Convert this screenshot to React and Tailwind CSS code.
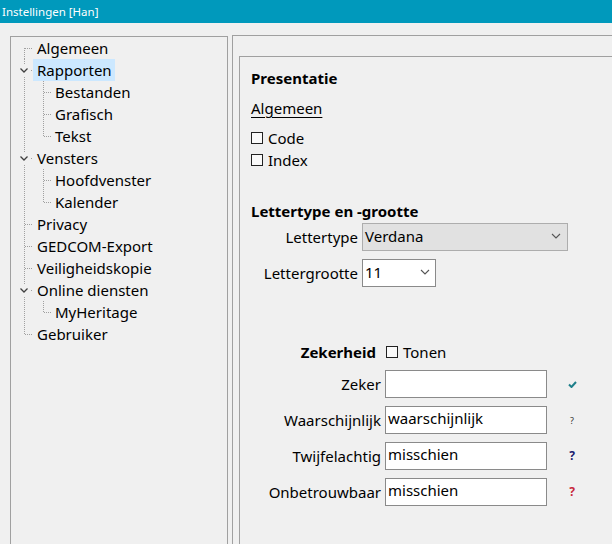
import React from 'react';

const FONT = { fontFamily: '"Noto Sans", "Open Sans", sans-serif' };

const tree = [
  { label: 'Algemeen', level: 1, first: true },
  { label: 'Rapporten', level: 1, open: true, selected: true },
  { label: 'Bestanden', level: 2 },
  { label: 'Grafisch', level: 2 },
  { label: 'Tekst', level: 2, lastChild: true },
  { label: 'Vensters', level: 1, open: true },
  { label: 'Hoofdvenster', level: 2 },
  { label: 'Kalender', level: 2, lastChild: true },
  { label: 'Privacy', level: 1 },
  { label: 'GEDCOM-Export', level: 1 },
  { label: 'Veiligheidskopie', level: 1 },
  { label: 'Online diensten', level: 1, open: true },
  { label: 'MyHeritage', level: 2, lastChild: true },
  { label: 'Gebruiker', level: 1, last: true },
];

const dot = { stroke: '#a0a0a0', strokeWidth: 1, strokeDasharray: '1 1' };

// connector lines for one tree row, drawn as a small svg
const Connector = ({ item }) => {
  const w = item.level === 1 ? 22 : 40;
  return (
    <svg width={w} height="22" className="shrink-0">
      <line x1="13.5" y1={item.first ? 11 : 0} x2="13.5" y2={item.last ? 11 : 22} style={dot} />
      {item.level === 1 && <line x1="14" y1="11.5" x2="22" y2="11.5" style={dot} />}
      {item.level === 2 && (
        <>
          <line x1="32.5" y1="0" x2="32.5" y2={item.lastChild ? 11 : 22} style={dot} />
          <line x1="33" y1="11.5" x2="40" y2="11.5" style={dot} />
        </>
      )}
      {item.open && (
        <>
          <rect x="8" y="6" width="11" height="11" fill="#f0f0f0" />
          <path d="M9.5 9.5 L13 13 L16.5 9.5" fill="none" stroke="#404040" strokeWidth="1.3" />
        </>
      )}
    </svg>
  );
};

const CheckBox = () => (
  <span className="inline-block w-[12px] h-[12px] border border-[#222] bg-[#fafafa] shrink-0" />
);

const Chevron = () => (
  <svg width="10" height="6" viewBox="0 0 10 6">
    <path d="M1 1 L5 5 L9 1" fill="none" stroke="#555" strokeWidth="1.1" />
  </svg>
);

const Field = ({ label, value, icon }) => (
  <div className="flex items-center h-[28px] mt-[8px]">
    <div className="w-[130px] text-right">{label}</div>
    <div className="ml-[4px] w-[162px] h-[28px] border border-[#8a8a8a] bg-white pl-[2px] flex items-center leading-none pb-[3px]">
      {value}
    </div>
    <div className="ml-[19px] w-[12px] flex justify-center">{icon}</div>
  </div>
);

export default function App() {
  return (
    <div style={FONT} className="w-[612px] h-[544px] overflow-hidden bg-[#f0f0f0] text-black flex flex-col">
      <div className="h-[23px] bg-[#0099bc] text-white text-[11.5px] pl-[2px] flex items-center shrink-0">
        Instellingen [Han]
      </div>

      <div className="flex items-start pt-[12px]">
        {/* tree */}
        <div className="mt-[1px] ml-[10px] w-[218px] h-[540px] border border-[#a0a0a0] shrink-0 text-[15px]">
          {tree.map((item) => (
            <div key={item.label} className="flex items-center h-[22px]">
              <Connector item={item} />
              <span
                className={
                  'h-[22px] flex items-center pl-[4px] pr-[3px] leading-none ' +
                  (item.selected ? 'bg-[#cce8ff]' : '')
                }
              >
                {item.label}
              </span>
            </div>
          ))}
        </div>

        {/* settings */}
        <div className="ml-[4px] w-[420px] h-[540px] border border-[#a0a0a0] shrink-0 pl-[6px] pt-[20px]">
          <div className="w-[420px] h-[520px] border border-[#a0a0a0] pl-[11px] text-[15px]">
            <div className="mt-[10px] h-[22px] flex items-center font-bold">Presentatie</div>
            <div className="mt-[8px] h-[22px] flex items-center">
              <span className="underline underline-offset-[3px]">Algemeen</span>
            </div>
            <div className="mt-[8px] h-[22px] flex items-center gap-[5px]">
              <CheckBox />
              <span>Code</span>
            </div>
            <div className="h-[22px] flex items-center gap-[5px]">
              <CheckBox />
              <span>Index</span>
            </div>

            <div className="mt-[29px] h-[22px] flex items-center font-bold">Lettertype en -grootte</div>
            <div className="mt-[1px] flex items-center h-[28px]">
              <div className="w-[107px] text-right">Lettertype</div>
              <div className="ml-[4px] w-[206px] h-[28px] border border-[#adadad] bg-[#e1e1e1] flex items-center justify-between pl-[2px] pr-[6px] pb-[2px]">
                <span>Verdana</span>
                <Chevron />
              </div>
            </div>
            <div className="mt-[8px] flex items-center h-[28px]">
              <div className="w-[107px] text-right">Lettergrootte</div>
              <div className="ml-[4px] w-[74px] h-[28px] border border-[#8a8a8a] bg-white flex items-center justify-between pl-[2px] pr-[5px] pb-[2px]">
                <span>11</span>
                <Chevron />
              </div>
            </div>

            <div className="mt-[54px] h-[22px] flex items-center">
              <div className="w-[130px] text-right pr-[5px] font-bold">Zekerheid</div>
              <div className="ml-[5px] flex items-center gap-[5px]">
                <CheckBox />
                <span>Tonen</span>
              </div>
            </div>
            <div className="-mt-[1px]">
              <Field
                label="Zeker"
                value=""
                icon={
                  <svg width="9" height="7" viewBox="0 0 9 7">
                    <path d="M1 3.5 L3.5 6 L8 1" fill="none" stroke="#1e7f8a" strokeWidth="2" />
                  </svg>
                }
              />
              <Field
                label="Waarschijnlijk"
                value="waarschijnlijk"
                icon={<span className="text-[9px] text-[#333] leading-none">?</span>}
              />
              <Field
                label="Twijfelachtig"
                value="misschien"
                icon={<span className="text-[12px] font-bold text-[#1a1a6e] leading-none">?</span>}
              />
              <Field
                label="Onbetrouwbaar"
                value="misschien"
                icon={<span className="text-[12px] font-bold text-[#c8283c] leading-none">?</span>}
              />
            </div>
          </div>
        </div>
      </div>
    </div>
  );
}
